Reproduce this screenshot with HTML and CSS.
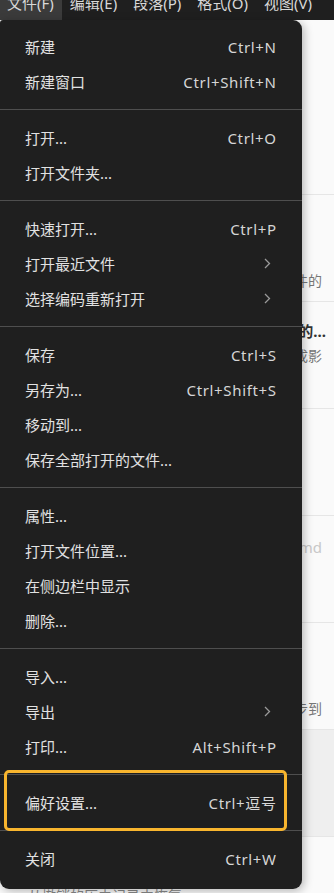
FILE: index.html
```html
<!DOCTYPE html>
<html lang="zh-CN">
<head>
  <meta charset="UTF-8">
  <title>文件菜单</title>
  <link rel="stylesheet" href="styles.css">
</head>
<body>

<div class="menubar">
  <span class="menubar-item active">文件(F)</span>
  <span class="menubar-item">编辑(E)</span>
  <span class="menubar-item">段落(P)</span>
  <span class="menubar-item">格式(O)</span>
  <span class="menubar-item">视图(V)</span>
</div>

<div class="page">
  <div class="doc-row first"></div>
  <div class="doc-row"><p class="sub second">配置文件的</p></div>
  <div class="doc-row"><p class="title">保存时的...</p><p class="sub">会对图片造成影</p></div>
  <div class="doc-row"></div>
  <div class="doc-row"><p class="hint">.md</p></div>
  <div class="doc-row"><p class="sub second">同步到</p></div>
  <div class="doc-row selected"></div>
  <div class="doc-row"><p class="tail">从撤销的历史记录中恢复</p></div>
</div>

<div class="menu">
  <div class="item"><span>新建</span><span class="key">Ctrl+N</span></div>
  <div class="item"><span>新建窗口</span><span class="key">Ctrl+Shift+N</span></div>
  <div class="sep"></div>
  <div class="item"><span>打开...</span><span class="key">Ctrl+O</span></div>
  <div class="item"><span>打开文件夹...</span></div>
  <div class="sep"></div>
  <div class="item"><span>快速打开...</span><span class="key">Ctrl+P</span></div>
  <div class="item"><span>打开最近文件</span><svg class="chevron" width="7" height="11" viewBox="0 0 7 11"><polyline points="1,1 5.5,5.5 1,10" /></svg></div>
  <div class="item"><span>选择编码重新打开</span><svg class="chevron" width="7" height="11" viewBox="0 0 7 11"><polyline points="1,1 5.5,5.5 1,10" /></svg></div>
  <div class="sep"></div>
  <div class="item"><span>保存</span><span class="key">Ctrl+S</span></div>
  <div class="item"><span>另存为...</span><span class="key">Ctrl+Shift+S</span></div>
  <div class="item"><span>移动到...</span></div>
  <div class="item"><span>保存全部打开的文件...</span></div>
  <div class="sep"></div>
  <div class="item"><span>属性...</span></div>
  <div class="item"><span>打开文件位置...</span></div>
  <div class="item"><span>在侧边栏中显示</span></div>
  <div class="item"><span>删除...</span></div>
  <div class="sep"></div>
  <div class="item"><span>导入...</span></div>
  <div class="item"><span>导出</span><svg class="chevron" width="7" height="11" viewBox="0 0 7 11"><polyline points="1,1 5.5,5.5 1,10" /></svg></div>
  <div class="item"><span>打印...</span><span class="key">Alt+Shift+P</span></div>
  <div class="sep"></div>
  <div class="item"><span>偏好设置...</span><span class="key">Ctrl+逗号</span></div>
  <div class="sep"></div>
  <div class="item"><span>关闭</span><span class="key">Ctrl+W</span></div>

  <div class="mark"></div>
</div>

</body>
</html>
```

FILE: styles.css
```css
body {
  margin: 0;
  height: 893px;
  overflow: hidden;
  background-color: #fafafa;
  font-family: "Noto Sans", "Noto Sans CJK SC", sans-serif;
  position: relative;
}
.menubar {
  height: 20px;
  background-color: #1f1f1f;
  display: flex;
  overflow: hidden;
}
.menubar-item {
  color: #d8d8d8;
  font-size: 15px;
  line-height: 20px;
  margin-top: -7px;
  padding: 0 8px 7px 7px;
  margin-right: 1px;
}
.menubar-item.active {
  background-color: #3b3b3b;
}
.page {
  display: flex;
  flex-direction: column;
}
.doc-row {
  height: 107px;
  border-bottom: 1px solid #e6e6e6;
  box-sizing: border-box;
  padding: 16px 8px 0 28px;
  text-align: right;
}
.doc-row.first {
  height: 175px;
}
.doc-row.selected {
  background-color: #efefef;
}
.doc-row p {
  margin: 0;
  white-space: nowrap;
}
.title {
  font-size: 15px;
  font-weight: bold;
  color: #333;
  line-height: 22px;
  margin-top: 2px !important;
}
.sub {
  font-size: 14px;
  color: #777;
  line-height: 28px;
  margin-right: 4px !important;
}
.sub.second {
  margin-top: 56px !important;
}
.hint {
  font-size: 15px;
  color: #c8c8c8;
  margin-top: 5px !important;
  margin-right: 4px !important;
}
.tail {
  text-align: left;
  font-size: 14px;
  color: #888;
  margin-top: 32px !important;
}
.menu {
  position: absolute;
  top: 20px;
  left: 0;
  width: 302px;
  box-sizing: border-box;
  padding: 9px 0 13px;
  background-color: #1f1f1f;
  border-radius: 3px 9px 9px 9px;
  box-shadow: 2px 2px 10px rgba(0, 0, 0, 0.28);
  color: #e2e2e2;
  font-size: 15px;
}
.item {
  height: 35px;
  display: flex;
  align-items: center;
  justify-content: space-between;
  padding: 0 26px 0 25px;
  white-space: nowrap;
}
.key {
  color: #d6d6d6;
  letter-spacing: 0.65px;
  margin-right: -0.65px;
}
.chevron {
  fill: none;
  stroke: #9a9a9a;
  stroke-width: 1.3;
  margin-right: 5px;
}
.sep {
  height: 1px;
  background-color: #4e4e4e;
  margin: 10px 0;
}
.mark {
  position: absolute;
  left: 4px;
  top: 750px;
  width: 283px;
  height: 61px;
  box-sizing: border-box;
  border: 3px solid #f8b52e;
  border-radius: 5px;
}
```
